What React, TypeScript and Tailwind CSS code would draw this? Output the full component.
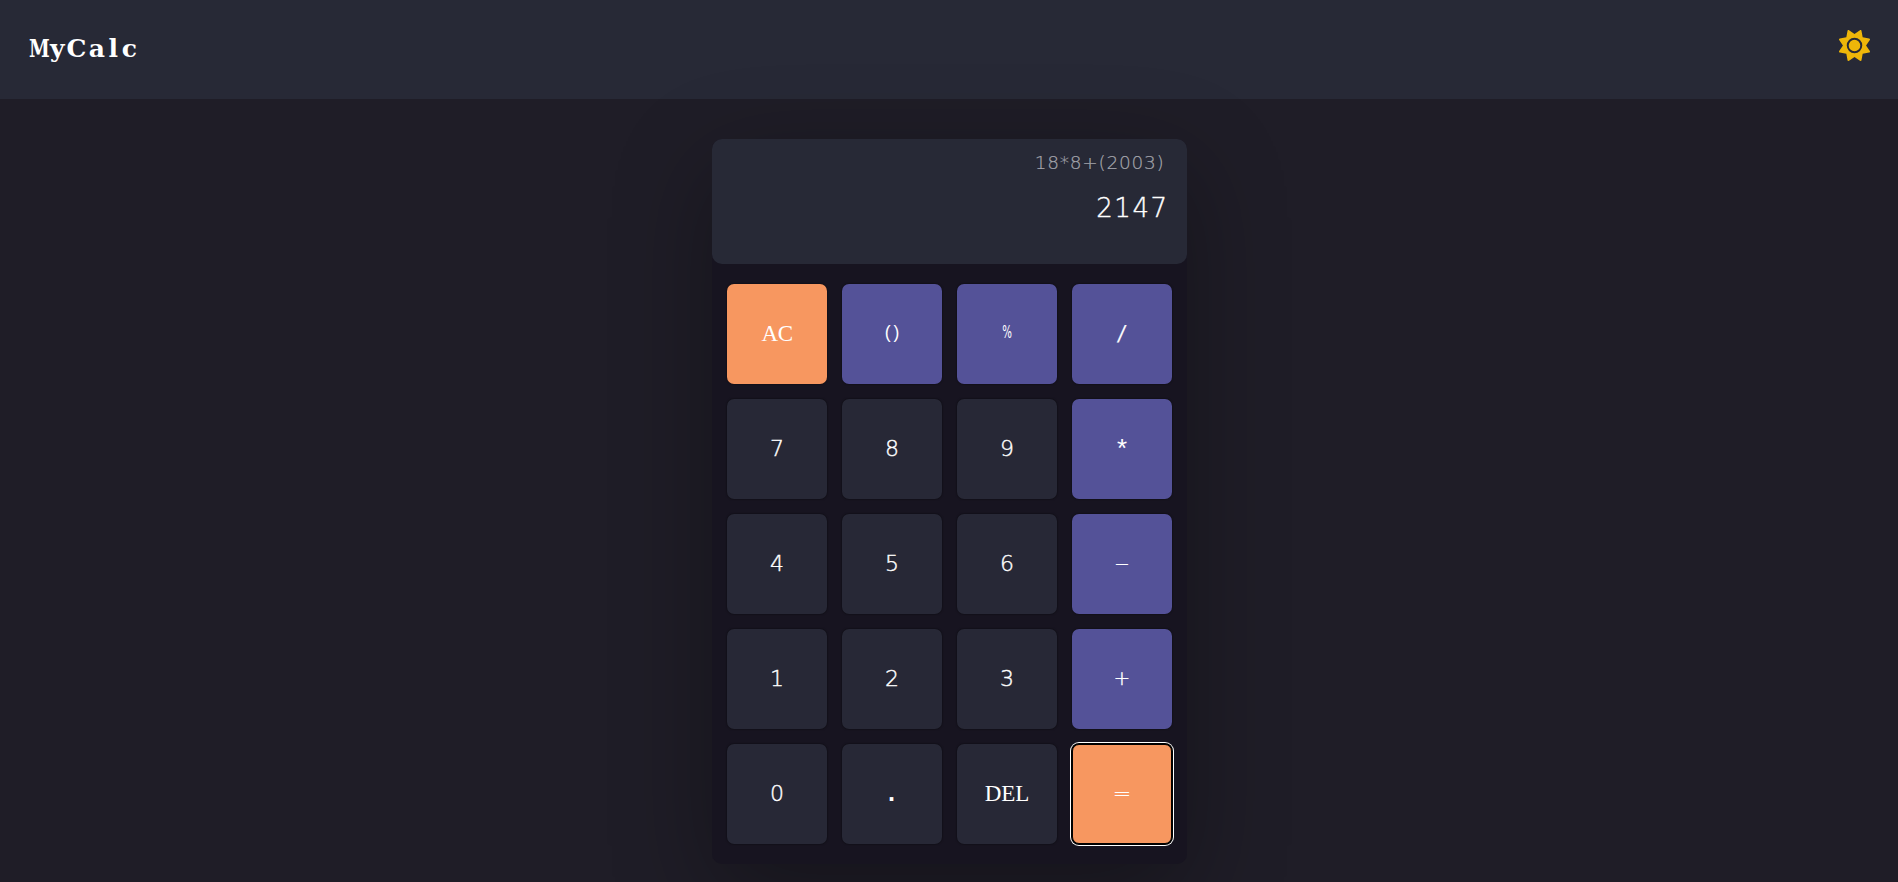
import { FaSun } from "react-icons/fa6";

type Kind = "num" | "op" | "accent";

interface KeyProps {
  label: string;
  kind: Kind;
  text?: string;
  focused?: boolean;
}

const keys: KeyProps[] = [
  { label: "AC", kind: "accent", text: "font-['Liberation_Serif',serif] text-[23px] tracking-[-0.5px] pb-[2px] pl-px" },
  { label: "()", kind: "op", text: "font-['Liberation_Sans',sans-serif] text-[17.5px] tracking-[3px] pl-[4px] pb-[2px]" },
  { label: "%", kind: "op", text: "font-['DejaVu_Sans',sans-serif] text-[17px] pb-[3px] pl-px [&>span]:scale-x-[0.6]" },
  { label: "/", kind: "op", text: "font-['DejaVu_Sans',sans-serif] font-extralight text-[22px] [-webkit-text-stroke:0.2px] [&>span]:scale-x-[1.4] pl-px" },
  { label: "7", kind: "num" },
  { label: "8", kind: "num" },
  { label: "9", kind: "num" },
  { label: "*", kind: "op", text: "font-['Liberation_Mono',monospace] text-[26px] pt-[4px] pl-px" },
  { label: "4", kind: "num" },
  { label: "5", kind: "num" },
  { label: "6", kind: "num" },
  { label: "-", kind: "op", text: "font-['DejaVu_Sans',sans-serif] font-extralight text-[22px] pb-[3px] [-webkit-text-stroke:0.2px] [&>span]:scale-x-[2]" },
  { label: "1", kind: "num" },
  { label: "2", kind: "num" },
  { label: "3", kind: "num" },
  { label: "+", kind: "op", text: "font-['DejaVu_Sans',sans-serif] font-extralight text-[20px] pb-[3px] pl-px [-webkit-text-stroke:0.3px]" },
  { label: "0", kind: "num" },
  { label: ".", kind: "num", text: "font-['Liberation_Mono',monospace] font-bold text-[25px]" },
  { label: "DEL", kind: "num", text: "font-['Liberation_Serif',serif] text-[23px] pl-px pb-[2px]" },
  { label: "=", kind: "accent", focused: true, text: "font-['DejaVu_Sans',sans-serif] font-extralight text-[22px] pl-px [-webkit-text-stroke:0.2px]" },
];

const digitText = "font-['DejaVu_Sans',sans-serif] font-extralight text-[22px] pb-px pl-px [-webkit-text-stroke:0.4px]";

const fills: Record<Kind, string> = {
  num: "bg-[#272836]",
  op: "bg-[#545298]",
  accent: "bg-[#f79760]",
};

function Key({ label, kind, text = digitText, focused }: KeyProps) {
  const ring = focused
    ? "border border-black shadow-[0_0_0_1px_#000,0_0_0_2px_#fff]"
    : "shadow-[0_0_2px_rgba(0,0,0,0.7)]";
  return (
    <button className={`flex size-[100px] items-center justify-center rounded-[7px] leading-none text-white ${fills[kind]} ${ring} ${text}`}>
      <span className="inline-block">{label}</span>
    </button>
  );
}

export default function App() {
  return (
    <div className="h-[882px] overflow-hidden bg-[#1f1d27] text-white">
      <header className="flex h-[99px] items-center justify-between bg-[#272936] pr-7 pl-[29px]">
        <h1 className="pb-px font-['DejaVu_Serif',serif] text-[25px] leading-[34px] font-bold tracking-[2.2px]">
          <span className="-mr-[9px] inline-block origin-left scale-x-[0.75]">M</span>yCa<span className="mx-[1.5px]">l</span>c
        </h1>
        <FaSun className="mb-2 size-[31px] text-[#eeb609]" />
      </header>
      <main className="mx-auto mt-10 h-[725px] w-[475px] rounded-[10px] bg-[#171420] shadow-[0_30px_100px_rgba(0,0,0,0.32)]">
        <section className="flex h-[125px] flex-col items-end rounded-[10px] bg-[#272936] pt-[12px] pr-[18px] font-['DejaVu_Sans',sans-serif] font-extralight">
          <p className="pr-[4px] text-[18.5px] leading-[24px] tracking-[0.75px] text-[#a5a6ad] [-webkit-text-stroke:0.2px]">18*8+(2003)</p>
          <p className="mt-[15px] text-[26px] leading-[36px] tracking-[1.5px] [-webkit-text-stroke:0.4px]">2147</p>
        </section>
        <section className="grid grid-cols-4 gap-[15px] px-[15px] py-5">
          {keys.map((k) => (
            <Key key={k.label} {...k} />
          ))}
        </section>
      </main>
    </div>
  );
}
